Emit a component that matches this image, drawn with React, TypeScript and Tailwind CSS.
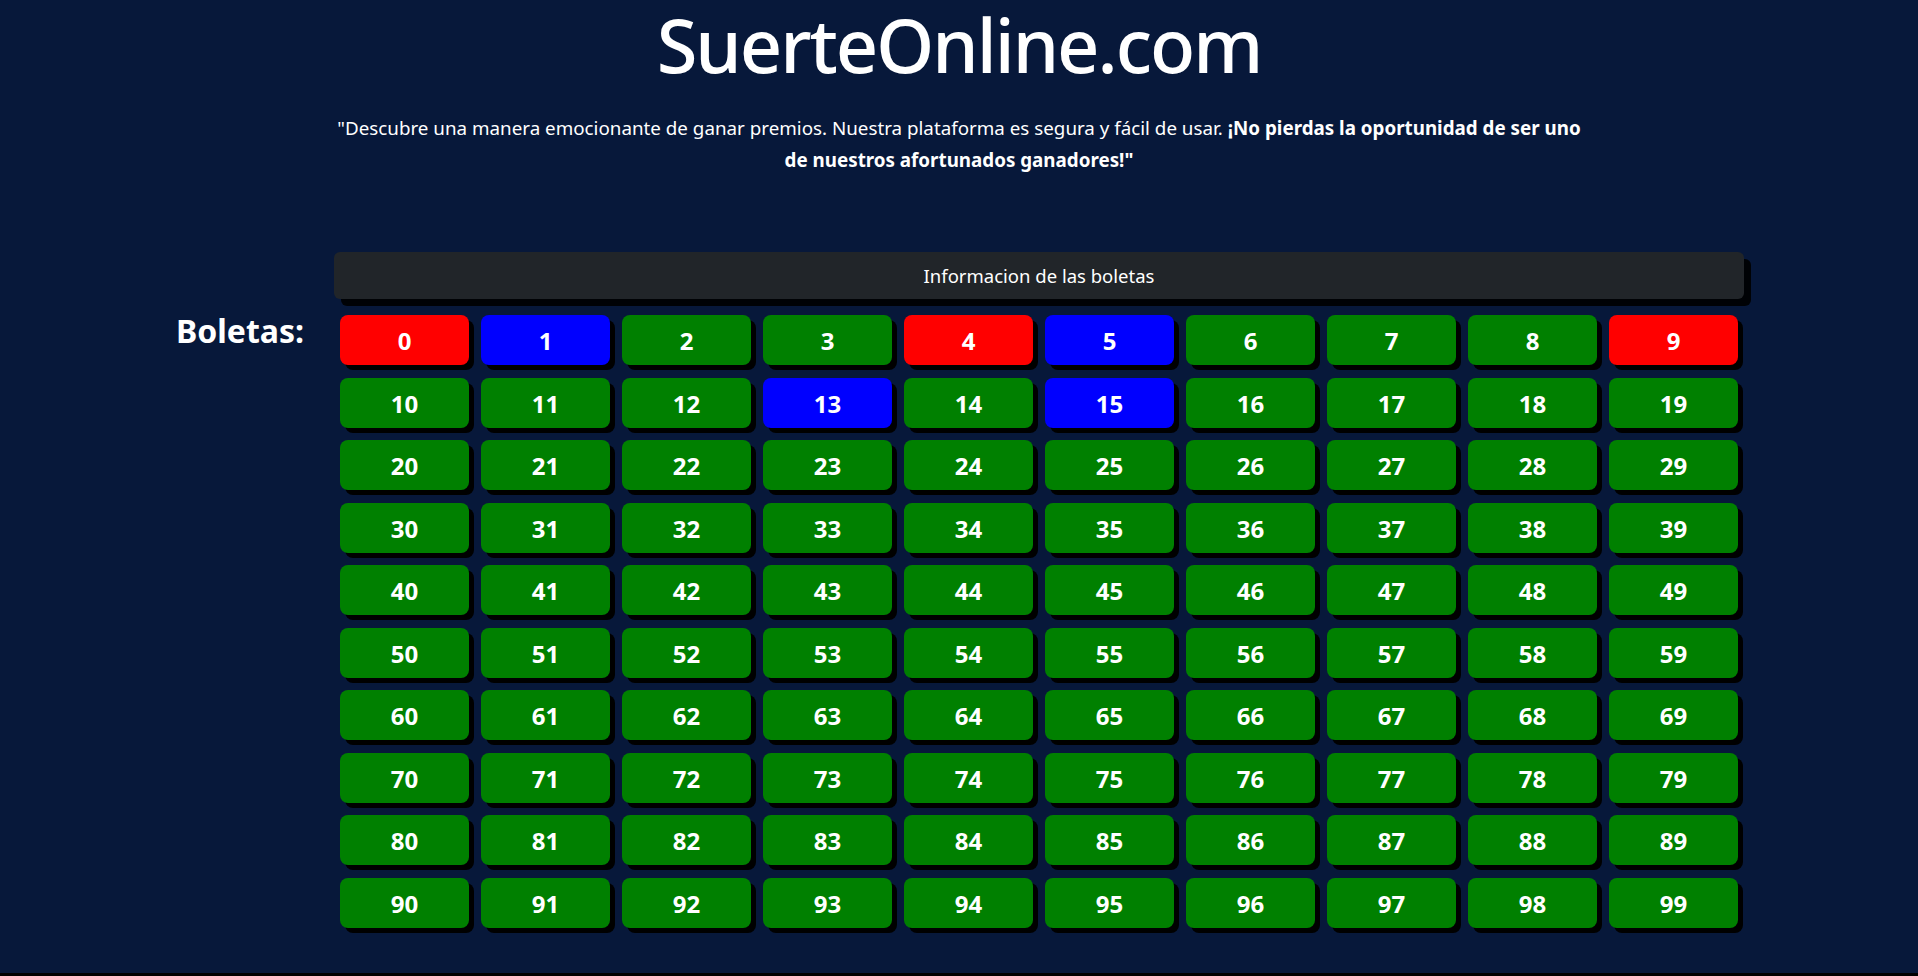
import React from "react";

const RED = new Set([0, 4, 9]);
const BLUE = new Set([1, 5, 13, 15]);

function colorFor(n: number) {
  if (RED.has(n)) return "bg-[#ff0000]";
  if (BLUE.has(n)) return "bg-[#0000ff]";
  return "bg-[#008000]";
}

export default function App() {
  const nums = Array.from({ length: 100 }, (_, i) => i);
  return (
    <div className="w-full bg-black" style={{ fontFamily: '"Noto Sans", "Open Sans", sans-serif' }}>
      <div className="h-[973px] w-full bg-[#07183a] text-white">
        <h1 className="pt-0 text-center text-[74px] font-medium leading-[90px] tracking-[-2px]">
          SuerteOnline.com
        </h1>
        <p className="mx-auto mt-[22px] text-center text-[18.8px] leading-[32px] whitespace-nowrap">
          "Descubre una manera emocionante de ganar premios. Nuestra plataforma es segura y fácil de usar.{" "}
          <b className="font-bold">¡No pierdas la oportunidad de ser uno</b>
          <br />
          <b className="font-bold">de nuestros afortunados ganadores!"</b>
        </p>
        <div className="mt-[76px] flex pl-[176px]">
          <div className="w-[158px] shrink-0 pt-[63px]">
            <h2 className="text-[32px] font-bold leading-none">Boletas:</h2>
          </div>
          <div className="w-[1410px] shrink-0">
            <div className="flex h-[47px] items-center justify-center rounded-[6px] bg-[#212529] text-[18.5px] shadow-[7px_7px_0_rgba(0,0,0,0.9)]">
              Informacion de las boletas
            </div>
            <div className="mt-[16px] grid grid-cols-10 gap-x-[12px] gap-y-[12.5px] px-[6px]">
              {nums.map((n) => (
                <button
                  key={n}
                  className={`flex h-[50px] items-center justify-center rounded-[8px] ${colorFor(n)} pt-[2px] text-[24px] font-bold text-white shadow-[5px_5px_0_#000]`}
                >
                  {n}
                </button>
              ))}
            </div>
          </div>
        </div>
      </div>
      <div className="h-[3px] w-full bg-black" />
    </div>
  );
}
